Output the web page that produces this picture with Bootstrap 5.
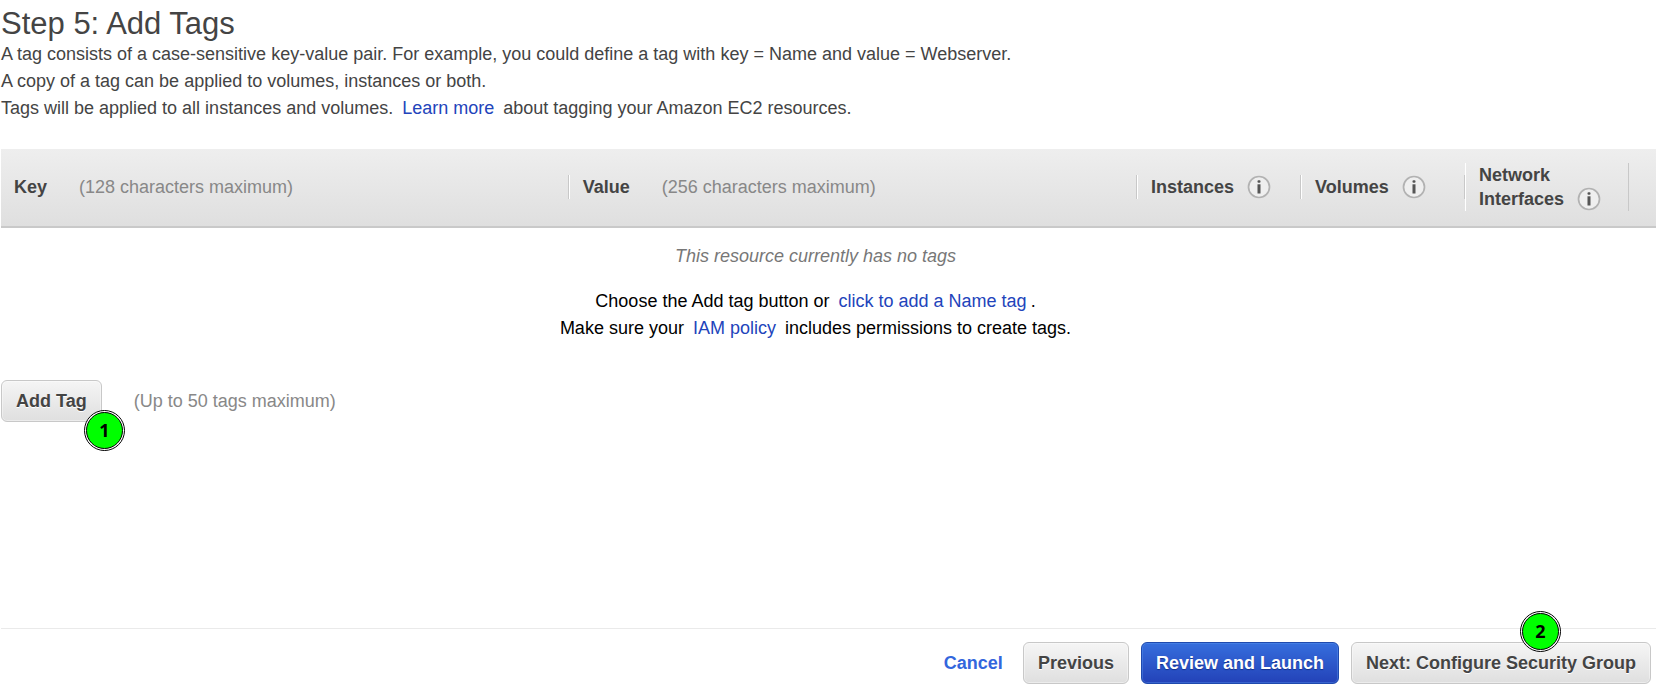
<!DOCTYPE html>
<html lang="en">
<head>
<meta charset="utf-8">
<meta name="viewport" content="width=device-width, initial-scale=1">
<title>Step 5: Add Tags</title>
<link href="https://cdn.jsdelivr.net/npm/bootstrap@5.3.0/dist/css/bootstrap.min.css" rel="stylesheet">
<style>
  body { font-family: "Liberation Sans", Arial, sans-serif; font-size: 18px; line-height: 27px; color: #444; background: #fff; }
  main { padding-left: 1px; }
  a { color: #2244bb; text-decoration: none; }
  a:hover { text-decoration: underline; }
  .intro { padding-top: 6px; margin-bottom: 27px; }
  .page-title { font-size: 31px; line-height: 35px; font-weight: 400; color: #444; }
  .inline-link { margin: 0 4px; }
  .hint { color: #888; }
  .tag-table { table-layout: fixed; border-collapse: separate; border-spacing: 0; color: #444;
    background: linear-gradient(#eee, #dfdfdf); border-bottom: 2px solid #c9c9c9; }
  .tag-table th { padding: 0 0 1px; height: 77px; vertical-align: middle; line-height: 24px; }
  .col-key { width: 34.3%; }
  .col-flag { width: 164px; }
  .col-end { width: 27px; }
  .cell-inner { display: flex; border-left: 1px solid #fff; border-right: 1px solid #c8c8c8; padding: 0 13px; }
  .cell-first { border-left: 0; }
  .cell-text { gap: 32px; }
  .cell-info { gap: 13px; }
  .info-icon { width: 24px; height: 24px; flex: none; }
  .empty-state { padding: 15px 26px 0 0; margin-bottom: 38px; color: #000; }
  .empty-note { color: #777; margin-bottom: 18px; }
  .btn-console { font-size: 18px; font-weight: 700; line-height: 24px; padding: 8px 14px; border-radius: 6px;
    --bs-btn-color: #444; --bs-btn-border-color: #c8c8c8; --bs-btn-hover-color: #222; --bs-btn-hover-border-color: #aaa;
    background: linear-gradient(#f5f5f5, #dfdfdf); text-shadow: 0 1px 0 #fff; box-shadow: inset 0 0 0 1px rgba(255,255,255,.4); }
  .btn-launch { --bs-btn-color: #fff; --bs-btn-border-color: #1f4aae; --bs-btn-hover-color: #fff;
    background: linear-gradient(#366edd, #2342b8); text-shadow: 0 1px 1px #13308a; box-shadow: inset 0 0 0 1px rgba(90,150,240,.4); }
  .add-row { gap: 32px; }
  .cancel-link { color: #3366dd; }
  .footer-bar { border-top: 1px solid #eaeaea; margin-left: 1px; padding: 13px 5px 9px; gap: 12px; }
  /* numbered callouts laid over the buttons */
  .step-marker { position: absolute; width: 41px; height: 41px; }
  .step-marker text { font: 700 18px "Open Sans", "Noto Sans", sans-serif; }
  .marker-add { left: 83px; top: 30px; }
  .marker-next { left: 169px; top: -31px; }
</style>
</head>
<body>
<svg class="d-none" aria-hidden="true">
  <symbol id="info" viewBox="0 0 24 24">
    <circle cx="12" cy="12" r="10.5" fill="#efefef" stroke="#b2b2b2" stroke-width="1.7"/>
    <rect x="10.5" y="5.2" width="3" height="2.6" rx="1" fill="#555"/>
    <rect x="10.5" y="9.3" width="3" height="9.2" fill="#555"/>
  </symbol>
</svg>
<div class="d-flex flex-column min-vh-100">
  <main class="flex-grow-1">
    <header class="intro">
      <h1 class="page-title mb-0">Step 5: Add Tags</h1>
      <p class="mb-0">A tag consists of a case-sensitive key-value pair. For example, you could define a tag with key = Name and value = Webserver.</p>
      <p class="mb-0">A copy of a tag can be applied to volumes, instances or both.</p>
      <p class="mb-0">Tags will be applied to all instances and volumes. <a class="inline-link" href="#">Learn more</a> about tagging your Amazon EC2 resources.</p>
    </header>

    <table class="tag-table w-100">
      <colgroup><col class="col-key"><col><col class="col-flag"><col class="col-flag"><col class="col-flag"><col class="col-end"></colgroup>
      <thead>
        <tr>
          <th scope="col"><div class="cell-inner cell-first cell-text">Key <span class="hint fw-normal">(128 characters maximum)</span></div></th>
          <th scope="col"><div class="cell-inner cell-text">Value <span class="hint fw-normal">(256 characters maximum)</span></div></th>
          <th scope="col"><div class="cell-inner cell-info">Instances <svg class="info-icon" role="img" aria-label="Info"><use href="#info"/></svg></div></th>
          <th scope="col"><div class="cell-inner cell-info">Volumes <svg class="info-icon" role="img" aria-label="Info"><use href="#info"/></svg></div></th>
          <th scope="col"><div class="cell-inner cell-info align-items-end"><span>Network<br>Interfaces</span> <svg class="info-icon" role="img" aria-label="Info"><use href="#info"/></svg></div></th>
          <td></td>
        </tr>
      </thead>
    </table>

    <section class="empty-state text-center">
      <p class="empty-note fst-italic">This resource currently has no tags</p>
      <p class="mb-0">Choose the Add tag button or <a class="inline-link" href="#">click to add a Name tag</a>.</p>
      <p class="mb-0">Make sure your <a class="inline-link" href="#">IAM policy</a> includes permissions to create tags.</p>
    </section>

    <div class="add-row position-relative d-flex align-items-center">
      <button type="button" class="btn btn-console">Add Tag</button>
      <span class="hint">(Up to 50 tags maximum)</span>
      <svg class="step-marker marker-add" viewBox="0 0 41 41" role="img" aria-label="Marker 1"><circle cx="20.5" cy="20.5" r="20" fill="#fff" stroke="#000"/><circle cx="20.5" cy="20.5" r="18" fill="#0f0" stroke="#000" stroke-width="1"/><text x="20.5" y="27" text-anchor="middle">1</text></svg>
    </div>
  </main>

  <footer class="footer-bar d-flex justify-content-end align-items-center">
    <a class="cancel-link fw-bold me-2" href="#">Cancel</a>
    <button type="button" class="btn btn-console">Previous</button>
    <button type="button" class="btn btn-console btn-launch">Review and Launch</button>
    <div class="position-relative d-flex">
      <button type="button" class="btn btn-console">Next: Configure Security Group</button>
      <svg class="step-marker marker-next" viewBox="0 0 41 41" role="img" aria-label="Marker 2"><circle cx="20.5" cy="20.5" r="20" fill="#fff" stroke="#000"/><circle cx="20.5" cy="20.5" r="18" fill="#0f0" stroke="#000" stroke-width="1"/><text x="20.5" y="27" text-anchor="middle">2</text></svg>
    </div>
  </footer>
</div>
<script src="https://cdn.jsdelivr.net/npm/bootstrap@5.3.0/dist/js/bootstrap.bundle.min.js"></script>
</body>
</html>
